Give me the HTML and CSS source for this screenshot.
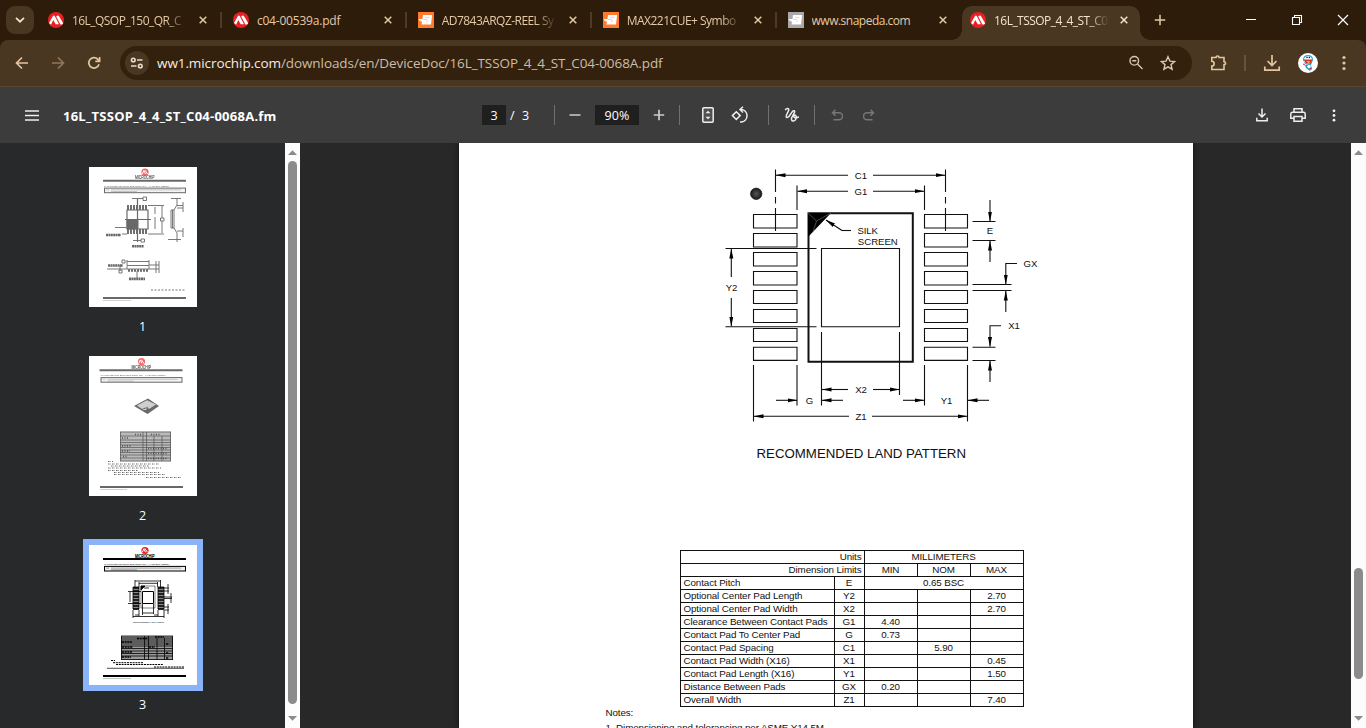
FILE: index.html
```
<!DOCTYPE html>
<html lang="en">
<head>
<meta charset="utf-8">
<title>16L_TSSOP_4_4_ST_C04-0068A.fm</title>
<link rel="stylesheet" href="styles.css">
</head>
<body>
<svg class="defs" width="0" height="0">
  <defs>
    <symbol id="mchp" viewBox="0 0 16 16"><circle cx="8" cy="8" r="8" fill="#ea1f23"/><path fill="#fff" d="M1 11 4.700 4.400Q5.800 2.800 7 4.400L11 12.300H7.700L5.300 8 3 12.700zM8.200 4.600Q9.800 2.400 11.200 4.400L15.200 11.200 14.200 12.600H12.400z"/></symbol>
    <symbol id="snap" viewBox="0 0 16 16"><rect width="16" height="16" fill="currentColor"/><path fill="#fff" d="M5 3H14V4L13 12.500H3.500L4 9.500H2.500V8.500H1V7H4.500z"/><path d="M5 7.500H9M7 5.600H11.500M8 9H10" stroke="currentColor" stroke-width=".8" opacity=".5"/></symbol>
    <symbol id="x" viewBox="0 0 8 8"><path d="M.7.700 7.300 7.300M7.300.7.700 7.300" stroke="currentColor" stroke-width="1.500" fill="none"/></symbol>
    <symbol id="up" viewBox="0 0 9 5"><path d="M0 5 4.500.3 9 5z" fill="#8b8b8b"/></symbol>
    <symbol id="down" viewBox="0 0 9 5"><path d="M0 0H9L4.500 4.700z" fill="#8b8b8b"/></symbol>
    <symbol id="head" viewBox="0 0 90 30">
      <circle cx="44" cy="5.700" r="3.600" fill="#ea1f23"/><path d="M41.300 7.500 42.800 4 44.500 7.500M43.800 3.600 46.500 7.500" stroke="#fff" stroke-width="1" fill="none"/>
      <text x="34" y="12.800" font-size="4.600" textLength="19.500" lengthAdjust="spacingAndGlyphs" stroke="currentColor" stroke-width=".2">MICROCHIP</text>
      <path d="M2 14.200H85" stroke="currentColor" stroke-width="1.900"/>
      <text x="3" y="20.300" font-size="2.400" textLength="65" lengthAdjust="spacingAndGlyphs">16-Lead Plastic Thin Shrink Small Outline (ST) - 4.4 mm Body [TSSOP]</text>
      <rect x="3.500" y="21.600" width="81" height="4.600" fill="#eee" stroke="currentColor" stroke-width="1"/>
      <path d="M5 23.300H8M10 23.300H80M10 25H36" stroke="currentColor" stroke-width=".6" opacity=".55"/>
    </symbol>
    <marker id="a" viewBox="0 0 10 5" refX="9.500" refY="2.500" markerWidth="10" markerHeight="5" markerUnits="userSpaceOnUse" orient="auto-start-reverse"><path d="M0 .5 10 2.500 0 4.500z"/></marker>
  </defs>
</svg>

<header class="tabstrip">
  <button class="tab-search"><svg width="10" height="6" viewBox="0 0 10 6"><path d="M1 .8 5 4.700 9 .8" fill="none" stroke="currentColor" stroke-width="1.800"/></svg></button>
  <div class="tabs">
    <div class="tab"><svg class="fav"><use href="#mchp"/></svg><span class="title fade">16L_QSOP_150_QR_C</span><svg class="close"><use href="#x"/></svg></div>
    <div class="tab"><svg class="fav"><use href="#mchp"/></svg><span class="title">c04-00539a.pdf</span><svg class="close"><use href="#x"/></svg></div>
    <div class="tab"><svg class="fav orange"><use href="#snap"/></svg><span class="title fade">AD7843ARQZ-REEL Sy</span><svg class="close"><use href="#x"/></svg></div>
    <div class="tab"><svg class="fav orange"><use href="#snap"/></svg><span class="title fade mid">MAX221CUE+ Symbo</span><svg class="close"><use href="#x"/></svg></div>
    <div class="tab last"><svg class="fav grey"><use href="#snap"/></svg><span class="title mid">www.snapeda.com</span><svg class="close"><use href="#x"/></svg></div>
    <div class="tab active"><svg class="fav"><use href="#mchp"/></svg><span class="title fade">16L_TSSOP_4_4_ST_C0</span><svg class="close"><use href="#x"/></svg></div>
  </div>
  <svg class="plus" width="12" height="12" viewBox="0 0 12 12"><path d="M6 .8V11.200M.8 6H11.200" stroke="currentColor" stroke-width="1.500"/></svg>
  <div class="window-buttons">
    <svg width="12" height="12" viewBox="0 0 12 12"><path d="M1 5.500H11" stroke="#fff"/></svg>
    <svg width="12" height="12" viewBox="0 0 12 12" fill="none" stroke="#fff" stroke-width="1.100"><path d="M1.500 3.500H8.500V10.500H1.500zM3.500 3.500V1.500H10.500V8.500H8.500"/></svg>
    <svg width="12" height="12" viewBox="0 0 12 12"><path d="M1 1 11 11M11 1 1 11" stroke="#fff" stroke-width="1.200"/></svg>
  </div>
</header>

<div class="nav-wrap">
<nav class="navbar">
  <svg class="nav-icon" viewBox="0 0 16 16"><path d="M14 8H3M8 2.500 2.500 8 8 13.500"/></svg>
  <svg class="nav-icon dim" viewBox="0 0 16 16"><path d="M2 8H13M8 2.500 13.500 8 8 13.500"/></svg>
  <svg class="nav-icon" viewBox="0 0 16 16"><path d="M13 9.200A5.200 5.200 0 1 1 11.800 4.300L13.300 6M13.600 2V6.300H9.300"/></svg>
  <div class="omnibox">
    <span class="site"><svg width="14" height="12" viewBox="0 0 14 12" fill="none" stroke="#e8dccc" stroke-width="1.600"><circle cx="3.300" cy="3" r="1.800"/><path d="M7 3H12.500M1 9H6.500"/><circle cx="10.300" cy="9" r="1.800"/></svg></span>
    <span class="url"><b>ww1.microchip.com</b>/downloads/en/DeviceDoc/16L_TSSOP_4_4_ST_C04-0068A.pdf</span>
    <svg class="omni-icon" viewBox="0 0 16 16"><circle cx="6.300" cy="5.800" r="4.300"/><path d="M9.500 9 14.500 14M4.300 5.800H8.300"/></svg>
    <svg class="omni-icon" viewBox="0 0 16 16"><path d="M8 1.700 9.900 6.100 14.600 6.500 11 9.600 12.100 14.200 8 11.800 3.900 14.200 5 9.600 1.400 6.500 6.100 6.100z"/></svg>
  </div>
  <svg class="ext" width="18" height="18" viewBox="0 0 18 18"><path d="M1.800 3.500H6A1.500 1.500 0 0 1 9 3.500H14V7.700A1.500 1.600 0 0 1 14 10.900V15.500H1.800V12A2.300 2.300 0 0 0 1.800 7.300z" fill="none" stroke="currentColor" stroke-width="1.600"/></svg>
  <i class="nav-sep"></i>
  <svg class="dl" width="18" height="18" viewBox="0 0 18 18"><path d="M9 1V11M4.500 7 9 11.500 13.500 7M1.800 12.500V16.200H16.200V12.500" fill="none" stroke="currentColor" stroke-width="1.700"/></svg>
  <svg class="avatar" width="20" height="20" viewBox="0 0 20 20"><circle cx="10" cy="10" r="10" fill="#fff"/><path d="M5 7Q5 2 10 2T15 7L13 12 7 11z" fill="#27a5dc"/><ellipse cx="10" cy="7" rx="4" ry="3.800" fill="#fff"/><path d="M5.500 6.500H14.500L13 10.500H8z" fill="#d6332f"/><path d="M8 8H12L11 10.500z" fill="#f0b345"/><path d="M7 12 12 11 14 15 12 18 8 15z" fill="#249bd0"/><circle cx="11" cy="13.500" r="1.700" fill="#fff"/><path d="M5 11 7 12M12 15.500 14 16" stroke="#d6332f"/><circle cx="9" cy="4.500" r=".7"/><circle cx="11.300" cy="4.500" r=".7"/></svg>
  <svg class="dots" width="4" height="16" viewBox="0 0 4 16" fill="currentColor"><circle cx="2" cy="2.500" r="1.600"/><circle cx="2" cy="8" r="1.600"/><circle cx="2" cy="13.500" r="1.600"/></svg>
</nav>
</div>

<div class="pdfbar">
  <div class="pdf-left">
    <svg width="14" height="11" viewBox="0 0 14 11"><path d="M0 1H14M0 5.500H14M0 10H14" stroke="#eee" stroke-width="1.500"/></svg>
    <strong>16L_TSSOP_4_4_ST_C04-0068A.fm</strong>
  </div>
  <div class="pdf-mid">
    <span class="field page-no">3</span><span class="slash">/</span><span class="total">3</span>
    <i class="sep s1"></i>
    <svg class="minus" width="12" height="12" viewBox="0 0 12 12"><path d="M.5 6H11.500" stroke="#ccc" stroke-width="1.500"/></svg>
    <span class="field zoom">90%</span>
    <svg class="zoom-in" width="12" height="12" viewBox="0 0 12 12"><path d="M.8 6H11.200M6 .8V11.200" stroke="#ccc" stroke-width="1.700"/></svg>
    <i class="sep s2"></i>
    <svg class="fit" width="12" height="16" viewBox="0 0 12 16"><rect x=".8" y=".8" width="10.400" height="14.400" rx="1" fill="#505050" stroke="#eee" stroke-width="1.500"/><path d="M3.500 6.200 6 3.700 8.500 6.200zM3.500 9.800H8.500L6 12.300z" fill="#eee"/></svg>
    <svg class="rotate" width="18" height="18" viewBox="0 0 18 18" fill="none" stroke="#eee" stroke-width="1.500"><path d="M5.300 5.700 9.200 9.600 5.300 13.500 1.400 9.600zM9.500 3.500H10.500A6.300 6.300 0 0 1 10.500 16H9M12 .8 9 3.500 12 6.500"/></svg>
    <i class="sep s3"></i>
    <svg class="ink" width="16" height="16" viewBox="0 0 16 16" fill="none" stroke="#eee" stroke-width="1.500"><path d="M1.200 3.200C2.500 1.200 5.200.8 4.700 3.200C4.200 5.500 1.700 8 2.200 9.800C2.700 11.200 4.300 10.300 5.300 9L8.300 4.600C9.600 3 11.300 3.600 10.500 5.400C9.500 7.800 7 10.300 7.500 12.500C8 14.800 10.800 14.500 11.800 12.300C12.700 10.200 12.200 8 10.800 8C9.300 8.200 9.500 10.600 11.200 10.700C12.600 10.800 13.500 10.100 15 10.100"/></svg>
    <i class="sep s4"></i>
    <svg class="undo" width="12" height="12" viewBox="0 0 12 12"><path d="M4.500.8 1.500 3.800 4.500 6.800M1.500 3.800H8A3.300 3.300 0 0 1 8 10.800H2.500"/></svg>
    <svg class="undo redo" width="12" height="12" viewBox="0 0 12 12"><path d="M7.500.8 10.500 3.800 7.500 6.800M10.500 3.800H4A3.300 3.300 0 0 0 4 10.800H9.500"/></svg>
  </div>
  <div class="pdf-right">
    <svg width="12" height="14" viewBox="0 0 12 14"><path d="M6 .5V8.500M2.500 5.500 6 9 9.500 5.500M.8 9.700V12.700H11.200V9.700" fill="none" stroke="#eee" stroke-width="1.500"/></svg>
    <svg width="16" height="14" viewBox="0 0 16 14" fill="none" stroke="#eee" stroke-width="1.500"><path d="M4 4V.8H12V4M3.500 10.200H.8V6Q.8 4.300 2.500 4.300H13.500Q15.200 4.300 15.200 6V10.200H12.500M4 8.500H12V13.200H4z"/></svg>
    <svg width="4" height="13" viewBox="0 0 4 13" fill="#eee"><circle cx="2" cy="1.800" r="1.400"/><circle cx="2" cy="6.500" r="1.400"/><circle cx="2" cy="11.200" r="1.400"/></svg>
  </div>
</div>

<main class="viewer">
  <aside class="sidebar">
    <figure class="thumb">
      <svg class="faded" width="108" height="140" viewBox="0 0 108 140">
        <use href="#head" x="12" y="-.5" width="90" height="30"/>
        <g fill="none" stroke="#222" stroke-width=".9">
          <path d="M38 43H59V62H38zM48.500 32V75M36 52.500H62" stroke-width="1.200"/>
          <path d="M39 38V43M42 38V43M45 38V43M48 38V43M51 38V43M54 38V43M57 38V43M39 62V67M42 62V67M45 62V67M48 62V67M51 62V67M54 62V67M57 62V67" stroke-width="1.900"/>
          <path d="M38 52.500H49V62H38z" fill="#222"/>
          <path d="M59 38.500H75M59 67H75M66 40V47M66 50V62M73 39V51M73 54V66M71.500 51H75V54H71.500zM43 31.500H54M54 30H57.500V33.500H54zM44 73.500H52M52 72H55.500V75H52zM33 67H38M26 60.500H37"/>
          <path d="M82 43H85V61H82zM83.500 43V61M85 43 88 38M85 61 88 66M88 31V38M88 66V75M82 31.500H92M79 72.500H92M88 38.500H94M88 41H94M88 64H94M94 35V45M94 61V70"/>
          <path d="M17 68H32M43 79.300H55" stroke-width="2.500" stroke-dasharray="2 .4"/>
          <path d="M38 98.500H60V102H38zM38 94.500H60M38 93V98M60 93V98M33 93H36V96H33zM18 102H38M60 98H70M60 102H70M67 94V106M70 94V106M48 104V111M31 104V98M30 103H33V106H30z"/>
          <path d="M39 103.500H60" stroke-width="2.500" stroke-dasharray="2 1"/><path d="M19 98.500H34M40 111.800H56" stroke-width="2.700" stroke-dasharray="2 .4"/>
          <path d="M62 123H97" stroke-dasharray="2 1.500"/><path d="M14 131H97" stroke-width="1.800"/><path d="M14 133.500H42" stroke-width=".5" opacity=".6"/>
        </g>
      </svg>
      <figcaption>1</figcaption>
    </figure>
    <figure class="thumb">
      <svg class="faded" width="108" height="140" viewBox="0 0 108 140">
        <use href="#head" x="8.500" y="0" width="90" height="30"/>
        <path d="M45 50 59 42.500 70 50 58.500 58z" fill="#222"/><path d="M48 49.500 58 44.200 67 48.500 60 53 58 50.500 53 53z" fill="#fff"/><path d="M57 50.500V53.500H54" stroke="#fff" fill="none"/>
        <rect x="31" y="75.500" width="51" height="30" fill="#999"/>
        <path d="M31 76H82M31 80H82M31 84H82M31 86.500H82M31 89H82M31 91.500H82M31 94H82M31 96.500H82M31 99H82M31 102H82M31 105H82M31.500 76V105M54 76V105M57.500 76V105M65 80V105M73 80V105M81.500 76V105" stroke="#222" stroke-width=".7"/>
        <path d="M46 78.500H53M62 78.500H72M33 82H39M33 90H42M59 92.500H78M59 97.500H78M34 100.500H38M59 102.500H78M33 95H41" stroke="#222" stroke-width="1.400" stroke-dasharray="1 1.500"/>
        <path d="M19 105.500H24M19 108H71M22 110H60M19 112H72M19 114.500H49M25 116.500H70M25 118.500H76M57 121.500H92" stroke="#222" stroke-width="1.200" stroke-dasharray="1.500 1 .5 1"/>
        <path d="M11 131H94" stroke="#222" stroke-width="1.800"/><path d="M11 133.500H38" stroke="#777" stroke-width=".5"/>
      </svg>
      <figcaption>2</figcaption>
    </figure>
    <figure class="thumb selected">
      <svg width="108" height="140" viewBox="0 0 108 140">
        <use href="#head" x="12" y="-.2" width="90" height="30"/>
        <g fill="none" stroke="#000" stroke-width=".8">
          <path d="M44 42H50V64H44zM69 42H75V64H69z" fill="#888"/>
          <path d="M44 43H50M44 46H50M44 49H50M44 52H50M44 55H50M44 58H50M44 61H50M44 64H50M69 43H75M69 46H75M69 49H75M69 52H75M69 55H75M69 58H75M69 61H75M69 64H75" stroke-width="1.300"/>
          <path d="M52 41H66V63H52z" stroke-width=".5"/><path d="M53.500 46.500H64.500V58.500H53.500z" stroke-width="1"/><path d="M52 41H56L52 45z" fill="#000"/>
          <path d="M46 35V43M71.500 35V43M46 36H71.500M50 37V42M68.500 37V42M50 38.300H68.500M39 46.500H52M39 58.500H52M41 47V57M53.500 59V70M64.500 59V69M44 65V73M75 65V73M50 65V71M69 65V71M44 71.500H75M46 70H50M53.500 68H64.500M65 70H69"/>
          <path d="M75 43H80M75 46H80M79 39V49M75 52H83M75 53.500H83M82 48V58M75 62H80M75 65H80M79 59V69M60 43H55M46 42.500H48"/>
        </g>
        <text x="44" y="78" font-size="2" textLength="31" lengthAdjust="spacingAndGlyphs">RECOMMENDED LAND PATTERN</text>
        <rect x="32" y="91" width="52" height="24" fill="#999"/>
        <path d="M32 91H84M32 93H84M32 95H84M32 97H84M32 99H84M32 101H84M32 103.500H84M32 106H84M32 108.500H84M32 111H84M32 114.500H84M32.500 91V114.500M55.500 91V114.500M59.500 91V114.500M68 93V114.500M75.500 93V114.500M83.500 91V114.500" stroke="#000" stroke-width=".8"/>
        <path d="M48 93.500H59M66 92H75M33 97H43M33 102H44M33 107H43M33 112H42M60 102H66M77 99H80M77 108H80M77 113H80" stroke="#000" stroke-width="1.400" stroke-dasharray="2 .7"/>
        <path d="M22 115.500H26M24 117.700H54M27 119.500H74M65 122H95" stroke="#000" stroke-width="1" stroke-dasharray="2 .8"/>
        <path d="M18 123.300H95" stroke="#000" stroke-width=".7"/><path d="M14 131H97" stroke="#000" stroke-width="1.900"/><path d="M14 133.500H42" stroke="#888" stroke-width=".5"/>
      </svg>
      <figcaption>3</figcaption>
    </figure>
  </aside>
  <div class="scroll side-scroll"><svg class="arrow"><use href="#up"/></svg><i class="bar"></i><svg class="arrow"><use href="#down"/></svg></div>
  <section class="canvas">
    <article class="page">
      <svg class="diagram" width="734" height="330" viewBox="459 143 734 330">
        <defs><radialGradient id="dot"><stop offset="0" stop-color="#555"/><stop offset="1" stop-color="#1a1a1a"/></radialGradient></defs>
        <g fill="none" stroke="#111" stroke-width="1.100">
          <path d="M753.500 214.500h43.500v13.500h-43.500zM753.500 233.500h43.500v13.500h-43.500zM753.500 252.500h43.500v13.500h-43.500zM753.500 271.500h43.500v13.500h-43.500zM753.500 290.500h43.500v13h-43.500zM753.500 309.500h43.500v13h-43.500zM753.500 328.500h43.500v13h-43.500zM753.500 347.200h43.500v13.200h-43.500z"/>
          <path d="M924.500 214.500h43v13.500h-43zM924.500 233.500h43v13.500h-43zM924.500 252.500h43v13.500h-43zM924.500 271.500h43v13.500h-43zM924.500 290.500h43v13h-43zM924.500 309.500h43v13h-43zM924.500 328.500h43v13h-43zM924.500 347.200h43v13.200h-43z"/>
          <path d="M808.500 213.300H912.800V361.800H808.500z" stroke-width="2"/>
          <path d="M821.500 248.500H899.500V326.700H821.500z"/>
          <path d="M775.500 169.500V192M775.500 197V203.500M775.500 208V231M945.500 169.500V192M945.500 197V203.500M945.500 208V231M797 185.500V210M924.500 185.500V210"/>
          <path d="M725.500 248.500H816.500M725.500 326.700H816.500M972.500 221.500H995.500M972.500 240.500H995.500M972.500 284.500H1011.500M972.500 290.500H1011.500M972.500 347.200H995.500M972.500 360.500H995.500"/>
          <path d="M753.500 365V421.500M797 365V405.500M821.500 332V405.500M899.500 332V395M924.500 365V405.500M967.500 365V421.500"/>
          <g marker-end="url(#a)">
            <path d="M848 175.200H776"/><path d="M873 175.200H945"/><path d="M848 191.200H797.500"/><path d="M873 191.200H924"/>
            <path d="M731.300 277V249"/><path d="M731.300 298V326"/><path d="M842 230.500 826 220"/>
            <path d="M990 200V221"/><path d="M990 262V241"/><path d="M1017 263.500H1005.800V284"/><path d="M1005.800 312V291"/><path d="M1001 325.700H990V346.500"/><path d="M990 382V361"/>
            <path d="M848 389.500H822"/><path d="M873 389.500H899"/><path d="M776 400.300H797"/><path d="M843 400.300H822"/><path d="M903 400.300H924"/><path d="M989 400.300H968"/><path d="M849 416.300H754"/><path d="M872 416.300H967"/>
          </g>
          <path d="M841.500 230.500H851"/>
        </g>
        <path d="M808 213H831L808 237z"/><path d="M808 213 816.500 221 831 213M816.500 221 813 232" fill="none" stroke="#777" stroke-width=".6"/>
        <circle cx="756.200" cy="193.800" r="5.700" fill="url(#dot)" stroke="#111" stroke-width=".7"/>
        <g class="dims" text-anchor="middle">
          <text x="861" y="178.600">C1</text><text x="861" y="194.600">G1</text><text x="731.500" y="291.200">Y2</text><text x="990" y="234.400">E</text><text x="1030.500" y="267">GX</text><text x="1014" y="329.300">X1</text><text x="861" y="393">X2</text><text x="809.500" y="403.800">G</text><text x="946.500" y="403.800">Y1</text><text x="861" y="419.800">Z1</text>
        </g>
        <g class="dims"><text x="857.500" y="234" textLength="20.500">SILK</text><text x="857.800" y="244.700" textLength="40">SCREEN</text></g>
        <text class="caption" x="756.500" y="458" textLength="209.500" lengthAdjust="spacingAndGlyphs">RECOMMENDED LAND PATTERN</text>
      </svg>
      <table class="specs">
        <colgroup><col class="c-name"><col class="c-sym"><col class="c-val"><col class="c-val"><col class="c-val"></colgroup>
        <tr><td colspan="2" class="r">Units</td><td colspan="3">MILLIMETERS</td></tr>
        <tr><td colspan="2" class="r">Dimension Limits</td><td>MIN</td><td>NOM</td><td>MAX</td></tr>
        <tr><td class="l">Contact Pitch</td><td>E</td><td colspan="3">0.65 BSC</td></tr>
        <tr><td class="l">Optional Center Pad Length</td><td>Y2</td><td></td><td></td><td>2.70</td></tr>
        <tr><td class="l">Optional Center Pad Width</td><td>X2</td><td></td><td></td><td>2.70</td></tr>
        <tr><td class="l">Clearance Between Contact Pads</td><td>G1</td><td>4.40</td><td></td><td></td></tr>
        <tr><td class="l">Contact Pad To Center Pad</td><td>G</td><td>0.73</td><td></td><td></td></tr>
        <tr><td class="l">Contact Pad Spacing</td><td>C1</td><td></td><td>5.90</td><td></td></tr>
        <tr><td class="l">Contact Pad Width (X16)</td><td>X1</td><td></td><td></td><td>0.45</td></tr>
        <tr><td class="l">Contact Pad Length (X16)</td><td>Y1</td><td></td><td></td><td>1.50</td></tr>
        <tr><td class="l">Distance Between Pads</td><td>GX</td><td>0.20</td><td></td><td></td></tr>
        <tr><td class="l">Overall Width</td><td>Z1</td><td></td><td></td><td>7.40</td></tr>
      </table>
      <div class="notes"><p>Notes:</p><p>1. Dimensioning and tolerancing per ASME Y14.5M</p></div>
    </article>
  </section>
  <div class="scroll main-scroll"><svg class="arrow"><use href="#up"/></svg><i class="bar"></i><svg class="arrow"><use href="#down"/></svg></div>
</main>
</body>
</html>
```
FILE: styles.css
```
* { box-sizing: border-box; }
body {
  margin: 0; width: 1366px; height: 728px; overflow: hidden;
  display: flex; flex-direction: column;
  background: #282828; color: #fff;
  font-family: "Open Sans", "Noto Sans", sans-serif; font-size: 12px;
}
svg { display: block; flex: none; }
.defs { position: absolute; }
i { flex: none; }

/* tab strip */
.tabstrip { height: 40px; display: flex; align-items: center; background: #2d1c09; color: #e3c9a8; flex: none; }
.tab-search {
  width: 28px; height: 28px; margin-left: 6px; padding: 0; border: 0; border-radius: 9px;
  background: #4a3722; color: #f3e0c8; display: flex; align-items: center; justify-content: center; flex: none;
}
.tabs { display: flex; height: 40px; margin-left: 4px; }
.tab { width: 184.900px; height: 40px; padding-left: 10px; display: flex; align-items: center; position: relative; flex: none; }
.tab:not(.last):not(.active)::after {
  content: ""; width: 2px; height: 16px; background: #4d3b27; margin-left: 13px;
}
.fav { width: 16px; height: 16px; }
.orange { color: #ff7a2d; }
.grey { color: #a9a9a9; }
.title { width: 115px; margin-left: 8px; overflow: hidden; white-space: nowrap; letter-spacing: -.2px; }
.title.fade { letter-spacing: -.55px; -webkit-mask-image: linear-gradient(90deg, #000 82%, transparent 100%); mask-image: linear-gradient(90deg, #000 82%, transparent 100%); }
.title.mid { letter-spacing: -.5px; }
.close { width: 8px; height: 8px; margin-left: 12px; }
.tab.last { width: 184px; }
.active { width: 178px; height: 34px; margin: 6px 0 0 .5px; padding: 0 0 6px 8px; border-radius: 10px 10px 0 0; background: #4a3722; color: #f5e3cc; }
.active .close { margin-left: 11px; }
.active::before, .active::after { content: ""; position: absolute; bottom: 0; width: 10px; height: 10px; }
.active::before { left: -10px; background: radial-gradient(circle at 0 0, transparent 9.500px, #4a3722 10px); }
.active::after { right: -10px; background: radial-gradient(circle at 100% 0, transparent 9.500px, #4a3722 10px); }
.plus { margin-left: 14px; }
.window-buttons { margin-left: auto; margin-right: 17px; display: flex; gap: 34px; }

/* address bar */
.nav-wrap { background: #2d1c09; flex: none; }
.navbar { height: 47px; padding: 0 20px 0 14px; display: flex; align-items: center; background: #4a3722; border-bottom: 1px solid #57452f; border-radius: 8px 8px 0 0; color: #e3c5a0; }
.nav-icon { width: 16px; height: 16px; margin-right: 20px; fill: none; stroke: currentColor; stroke-width: 1.700; }
.dim { opacity: .45; }
.omnibox { width: 1072px; height: 34px; margin-left: -2px; padding: 0 16px 0 5px; border-radius: 17px; background: #33210e; display: flex; align-items: center; flex: none; }
.site { width: 24px; height: 24px; border-radius: 50%; background: #4a3722; display: flex; align-items: center; justify-content: center; }
.url { flex: 1; margin-left: 8px; font-size: 13.500px; letter-spacing: -.08px; color: #cbbda9; white-space: nowrap; }
.url b { font-weight: 400; color: #f8ede0; }
.omni-icon { width: 16px; height: 16px; margin-left: 16px; fill: none; stroke: #d8c7b1; stroke-width: 1.400; }
.ext { margin-left: 18px; }
.nav-sep { width: 2px; height: 16px; margin-left: 16px; background: #6b5336; }
.dl { margin-left: 17px; }
.avatar { margin-left: 17px; }
.dots { margin-left: auto; }

/* document toolbar */
.pdfbar { height: 56px; display: flex; align-items: center; background: #3c3c3c; flex: none; }
.pdf-left { width: 482px; padding-left: 25px; display: flex; align-items: center; gap: 24px; font-size: 13px; white-space: nowrap; }
.pdf-left strong { font-weight: 700; letter-spacing: .25px; padding-top: 1px; }
.pdf-mid { display: flex; align-items: center; font-size: 12.500px; }
.field { height: 20px; line-height: 21px; background: #1f1f1f; text-align: center; }
.page-no { width: 24px; }
.slash { width: 5px; margin: 0 7px 0 4px; }
.total { width: 8px; }
.sep { width: 1px; height: 20px; background: #707070; }
.s1 { margin-left: 24px; }
.minus { margin-left: 14px; }
.zoom { width: 44px; margin-left: 14px; letter-spacing: .2px; }
.zoom-in { margin-left: 14px; }
.s2 { margin-left: 14px; }
.fit { margin-left: 22px; }
.rotate { margin-left: 17px; }
.s3 { margin-left: 19px; }
.ink { margin-left: 15px; }
.s4 { margin-left: 14px; }
.undo { margin-left: 16px; fill: none; stroke: #777; stroke-width: 1.500; }
.redo { margin-left: 20px; }
.pdf-right { margin-left: auto; margin-right: 30px; display: flex; align-items: center; gap: 26px; }
.pdf-right svg:nth-child(1) { margin-right: -4px; }

/* viewer */
.viewer { flex: 1; min-height: 0; display: flex; }
.sidebar { width: 285px; padding-top: 24px; background: #28292a; display: flex; flex-direction: column; align-items: center; overflow: hidden; flex: none; }
.thumb { margin: 0; height: 189px; flex: none; color: #222; }
.thumb svg { background: #fff; font-family: "Liberation Sans", sans-serif; }
.faded > * { opacity: .68; }
.selected { color: #000; }
.selected svg { box-shadow: 0 0 0 6px #8ab4f8; }
.thumb figcaption { height: 40px; line-height: 39px; text-align: center; color: #fff; font-size: 12.500px; }

.scroll { width: 15px; background: #fcfcfc; display: flex; flex-direction: column; align-items: center; padding: 7px 0; flex: none; }
.arrow { width: 9px; height: 5px; }
.bar { width: 9px; border-radius: 5px; background: #8b8b8b; }
.side-scroll .bar { height: 543px; margin: 6px 0 auto; }
.main-scroll .bar { height: 111px; margin: 413px 0 auto; }

.canvas { flex: 1; display: flex; justify-content: center; overflow: hidden; background: #282828; }
.page { width: 734px; background: #fff; color: #111; box-shadow: 0 0 5px #111; font-family: "Liberation Sans", Arial, sans-serif; flex: none; }
.dims { font-size: 9.600px; fill: #111; }
.caption { font-size: 12.800px; fill: #111; }
.specs { width: 344px; margin: 77px 0 0 221px; border-collapse: collapse; table-layout: fixed; font-size: 9.800px; letter-spacing: -.1px; line-height: 12px; }
.c-name { width: 154px; } .c-sym { width: 30px; } .c-val { width: 53px; }
.specs tr { height: 13px; }
.specs td { height: 13px; padding: 0; border: 1px solid #111; text-align: center; white-space: nowrap; }
.specs .l { text-align: left; padding-left: 3px; }
.specs .r { text-align: right; padding-right: 2px; }
.notes { margin: -1px 0 0 147px; font-size: 9.800px; letter-spacing: -.1px; line-height: 14px; }
.notes p { margin: 0; }
.notes p + p { padding-top: 1px; }
```
